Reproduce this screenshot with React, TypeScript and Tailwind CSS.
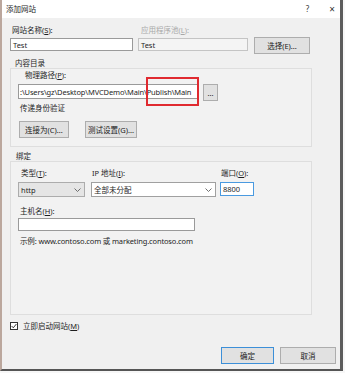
import React from 'react'

const font = { fontFamily: '"Noto Sans", "Noto Sans CJK SC", sans-serif' }

const Chevron = () => (
  <svg width="7" height="4" viewBox="0 0 7 4" className="shrink-0">
    <polyline points="0.5,0.5 3.5,3.5 6.5,0.5" fill="none" stroke="#606060" strokeWidth="0.9" />
  </svg>
)

const Btn = ({ label, w, primary }: { label: string; w: string; primary?: boolean }) => (
  <div
    className={`${w} h-[17px] flex items-center justify-center bg-[#e1e1e1] border ${
      primary ? 'border-[#3c8fd8]' : 'border-[#adadad]'
    } text-[#1a1a1a]`}
  >
    {label}
  </div>
)

export default function App() {
  return (
    <div className="w-[345px] h-[373px] bg-[#f7f7f7] overflow-hidden" style={font}>
      <div className="w-[343px] h-[371px] flex flex-col border-l-2 border-l-[#bba79d] border-r-[3px] border-r-[#5c5c5c] border-b-2 border-b-[#555555] bg-[#f0f0f0] text-[7.5px] leading-[10px] text-[#1e1e1e]">
        {/* title bar */}
        <div className="h-[18px] bg-white flex items-center pl-[4px] shrink-0">
          <span>添加网站</span>
          <span className="ml-auto text-[8px] text-[#333]">?</span>
          <span className="ml-[20px] mr-[5px] text-[10px] text-[#333]">×</span>
        </div>

        <div className="flex flex-col pl-[8px] pt-[7px]">
          {/* site name row */}
          <div className="flex h-[10px]">
            <span className="w-[128px] pl-[2px]">网站名称(<u>S</u>):</span>
            <span className="pl-[3px] text-[#a8a8a8]">应用程序池(<u>L</u>):</span>
          </div>
          <div className="flex items-start mt-[2px]">
            <div className="w-[123px] h-[13px] mt-[1px] bg-white border border-[#9a9a9a] pl-[2px] flex items-center">Test</div>
            <div className="w-[110px] h-[13px] mt-[1px] ml-[5px] bg-[#f4f4f4] border border-[#c4c4c4] pl-[2px] flex items-center">Test</div>
            <div className="ml-[6px]">
              <Btn label="选择(E)..." w="w-[56px]" />
            </div>
          </div>

          {/* content directory */}
          <span className="mt-[4px] pl-[5px] h-[10px]">内容目录</span>
          <div className="w-[302px] h-[79px] border border-[#dedede] bg-[#f2f2f2] flex flex-col pl-[7px] pt-[1px]">
            <span className="pl-[7px] h-[10px]">物理路径(<u>P</u>):</span>
            <div className="flex items-start mt-[4px]">
              <div className="relative">
                <div className="w-[180px] h-[15px] bg-white border border-[#9a9a9a] flex items-center overflow-hidden whitespace-nowrap pl-[1px] tracking-[-0.13px]">
                  :\Users\gz\Desktop\MVCDemo\Main\Publish\Main
                </div>
                <div className="absolute left-[128px] top-[-7px] w-[53px] h-[29px] border-2 border-[#e02a30]" />
              </div>
              <div className="ml-[5px] w-[15px] h-[17px] flex items-center justify-center bg-[#e1e1e1] border border-[#adadad]">...</div>
            </div>
            <span className="mt-[2px] pl-[2px] h-[10px]">传递身份验证</span>
            <div className="flex mt-[8px] pl-[1px]">
              <Btn label="连接为(C)..." w="w-[50px]" />
              <div className="ml-[16px]">
                <Btn label="测试设置(G)..." w="w-[52px]" />
              </div>
            </div>
          </div>

          {/* binding */}
          <span className="mt-[4px] pl-[6px] h-[10px]">绑定</span>
          <div className="w-[302px] h-[154px] border border-[#dedede] bg-[#f2f2f2] flex flex-col pl-[7px] pt-[6px]">
            <div className="flex h-[10px]">
              <span className="w-[73px] pl-[3px]">类型(<u>T</u>):</span>
              <span className="w-[129px] pl-[1px]">IP 地址(<u>I</u>):</span>
              <span className="pl-[1px]">端口(<u>O</u>):</span>
            </div>
            <div className="flex items-start mt-[4px]">
              <div className="w-[67px] h-[15px] bg-[#e5e5e5] border border-[#acacac] flex items-center pl-[2px] pr-[3px]">
                <span>http</span>
                <span className="ml-auto"><Chevron /></span>
              </div>
              <div className="ml-[6px] w-[125px] h-[15px] bg-white border border-[#a0a0a0] flex items-center pl-[2px] pr-[3px]">
                <span>全部未分配</span>
                <span className="ml-auto"><Chevron /></span>
              </div>
              <div className="ml-[4px] w-[34px] h-[14px] bg-white border border-[#4a9ae0] flex items-center pl-[2px]">8800</div>
            </div>
            <span className="mt-[9px] pl-[2px] h-[10px]">主机名(<u>H</u>):</span>
            <div className="mt-[2px] w-[177px] h-[13px] bg-white border border-[#9a9a9a]" />
            <span className="mt-[5px] pl-[2px] h-[10px] tracking-[-0.14px]">示例: www.contoso.com 或 marketing.contoso.com</span>
          </div>

          {/* auto start */}
          <div className="flex items-center mt-[6px] h-[10px]">
            <div className="w-[8px] h-[8px] bg-white border border-[#333] flex items-center justify-center">
              <svg width="6" height="6" viewBox="0 0 6 6">
                <polyline points="0.6,3 2.3,4.8 5.4,1" fill="none" stroke="#222" strokeWidth="0.9" />
              </svg>
            </div>
            <span className="ml-[5px]">立即启动网站(<u>M</u>)</span>
          </div>

          {/* dialog buttons */}
          <div className="flex justify-end mt-[16px] pr-[4px]">
            <Btn label="确定" w="w-[53px]" primary />
            <div className="ml-[6px]">
              <Btn label="取消" w="w-[56px]" />
            </div>
          </div>
        </div>
      </div>
    </div>
  )
}
